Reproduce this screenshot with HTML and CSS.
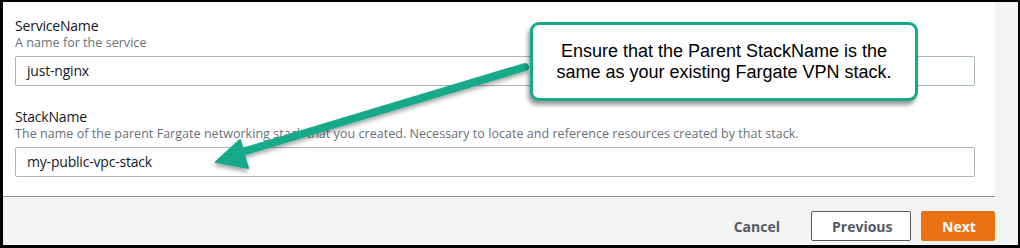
FILE: index.html
```html
<!DOCTYPE html>
<html>
<head>
<meta charset="utf-8">
<link rel="stylesheet" href="styles.css">
</head>
<body>
<div class="frame">
  <div class="screen">
    <div class="panel">
      <div class="field">
        <div class="label">ServiceName</div>
        <div class="desc">A name for the service</div>
        <div class="input">just-nginx</div>
      </div>
      <div class="field">
        <div class="label">StackName</div>
        <div class="desc">The name of the parent Fargate networking stack that you created. Necessary to locate and reference resources created by that stack.</div>
        <div class="input">my-public-vpc-stack</div>
      </div>
    </div>
    <div class="footer">
      <button class="btn btn-link">Cancel</button>
      <button class="btn btn-normal">Previous</button>
      <button class="btn btn-primary">Next</button>
    </div>
    <svg class="arrow" width="1015" height="243" viewBox="0 0 1015 243">
      <defs>
        <filter id="sh" x="-10%" y="-30%" width="120%" height="160%">
          <feDropShadow dx="-1" dy="3" stdDeviation="2" flood-color="#000" flood-opacity="0.35"/>
        </filter>
      </defs>
      <g filter="url(#sh)" fill="#16a98a" stroke="#16a98a">
        <line x1="522" y1="65" x2="236" y2="151" stroke-width="8" stroke-linecap="round"/>
        <polygon points="213,160 237,138 245,166" stroke-width="2" stroke-linejoin="round"/>
      </g>
    </svg>
    <div class="callout">Ensure that the Parent StackName is the<br>same as your existing Fargate VPN stack.</div>
  </div>
</div>
</body>
</html>
```

FILE: styles.css
```css
* { box-sizing: border-box; }
html, body { margin: 0; padding: 0; }
body {
  background: #000;
  width: 1020px;
  height: 248px;
  overflow: hidden;
  font-family: "Open Sans", "Noto Sans", sans-serif;
}
.frame {
  padding: 2px 2px 3px 3px;
  height: 248px;
}
.screen {
  position: relative;
  background: #f2f3f3;
  height: 243px;
  display: flex;
  flex-direction: column;
}
.panel {
  background: #fff;
  width: 992px;
  height: 195px;
  border-bottom: 1px solid #879596;
  padding: 15px 20px 0 12px;
  display: flex;
  flex-direction: column;
  gap: 22px;
}
.label {
  font-size: 14px;
  line-height: 18px;
  color: #16191f;
  letter-spacing: -0.2px;
}
.desc {
  font-size: 12.5px;
  line-height: 16px;
  color: #687078;
  letter-spacing: 0.04px;
}
.input {
  margin-top: 5px;
  height: 30px;
  border: 1px solid #aab7b8;
  border-radius: 2px;
  padding: 0 11px;
  font-size: 14px;
  line-height: 28px;
  color: #16191f;
  letter-spacing: -0.2px;
}
.footer {
  display: flex;
  justify-content: flex-end;
  align-items: center;
  padding: 14px 23px 0 0;
  gap: 10px;
}
.btn {
  font-family: "Open Sans", "Noto Sans", sans-serif;
  font-weight: 700;
  font-size: 14px;
  height: 30px;
  border-radius: 2px;
  padding: 0 20px;
  cursor: pointer;
}
.btn-link {
  background: transparent;
  border: 1px solid transparent;
  color: #545b64;
  margin-right: 0;
}
.btn-normal {
  background: #fff;
  border: 1px solid #545b64;
  color: #545b64;
  width: 100px;
}
.btn-primary {
  background: #ec7211;
  border: 1px solid #ec7211;
  color: #fff;
  width: 74px;
}
.arrow {
  position: absolute;
  left: 0;
  top: 0;
  pointer-events: none;
}
.callout {
  position: absolute;
  left: 527px;
  top: 20px;
  width: 388px;
  height: 79px;
  background: #fff;
  border: 3px solid #16a98a;
  border-radius: 9px;
  box-shadow: -2px 4px 4px rgba(0,0,0,0.4);
  font-family: "Liberation Sans", Arial, sans-serif;
  font-size: 18px;
  line-height: 21px;
  color: #000;
  text-align: center;
  display: flex;
  align-items: center;
  justify-content: center;
}
```
